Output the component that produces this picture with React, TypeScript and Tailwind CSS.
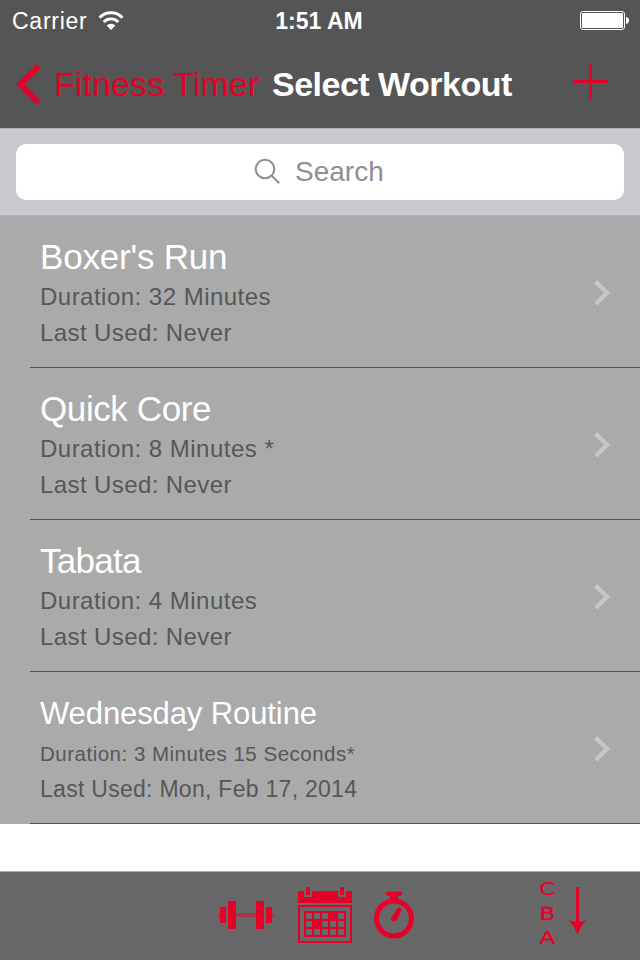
import clsx from "clsx";

const RED = "#e50027";

// ── data ─────────────────────────────────────────────────────────────────────

interface Workout {
  name: string;
  duration: string;
  lastUsed: string;
  nameClass: string;
  durationClass: string;
  lastUsedClass: string;
}

const regular = {
  durationClass: "text-[24px] leading-9 tracking-[0.48px]",
  lastUsedClass: "text-[24px] tracking-[0.4px]",
};

const WORKOUTS: Workout[] = [
  {
    name: "Boxer's Run",
    duration: "32 Minutes",
    lastUsed: "Never",
    nameClass: "text-[35px] tracking-[-0.2px]",
    ...regular,
  },
  {
    name: "Quick Core",
    duration: "8 Minutes *",
    lastUsed: "Never",
    nameClass: "text-[35px] tracking-[-0.4px]",
    ...regular,
  },
  {
    name: "Tabata",
    duration: "4 Minutes",
    lastUsed: "Never",
    nameClass: "text-[35px] tracking-[-0.7px]",
    ...regular,
  },
  {
    name: "Wednesday Routine",
    duration: "3 Minutes 15 Seconds*",
    lastUsed: "Mon, Feb 17, 2014",
    nameClass: "pt-px text-[31px] tracking-[-0.1px]",
    durationClass: "text-[20.5px] leading-[38px] tracking-[0.5px]",
    lastUsedClass: "text-[23px] tracking-[0.28px]",
  },
];

// ── icons ────────────────────────────────────────────────────────────────────

function WifiIcon() {
  return (
    <svg width="26" height="20" viewBox="0 0 26 20" fill="none">
      <path d="M1.6 6.6A16 16 0 0 1 24.4 6.6" stroke="#fff" strokeWidth="3" />
      <path d="M5.6 11A10.4 10.4 0 0 1 20.4 11" stroke="#fff" strokeWidth="2.7" />
      <path d="M13 19L8.6 14.6A6.2 6.2 0 0 1 17.4 14.6Z" fill="#fff" />
    </svg>
  );
}

function BatteryIcon() {
  return (
    <svg width="49" height="19" viewBox="0 0 49 19" fill="none">
      <rect x="0.5" y="0.5" width="44" height="18" rx="2.5" stroke="#fff" />
      <rect x="2" y="2" width="41" height="15" rx="1.2" fill="#fff" />
      <path d="M46 6C48 6.3 49 7.5 49 9.5S48 12.7 46 13Z" fill="#fff" />
    </svg>
  );
}

function DumbbellIcon() {
  return (
    <svg width="56" height="28" viewBox="0 0 56 28" fill={RED}>
      <path
        d="M0 12h2v4H0zM18 12h20v4H18zM54 12h2v4h-2z"
        fillOpacity="0.5"
      />
      <path d="M2 6h6v16H2zM10 0h8v28h-8zM38 0h8v28h-8zM48 6h6v16h-6z" />
    </svg>
  );
}

function CalendarIcon() {
  return (
    <svg width="54" height="56" viewBox="0 0 54 56" fill={RED}>
      <path d="M0 4h6v6h8V4h26v6h8V4h6v12H0z" />
      <path d="M8 0h4v8H8zM42 0h4v8h-4z" />
      <path
        fillRule="evenodd"
        d="M0 18h54v38H0zM2 20v34h50V20zM6 24h42v26H6zM8 26v6h6v-6zM16 26v6h6v-6zM24 26v6h6v-6zM40 26v6h6v-6zM8 34v6h6v-6zM24 34v6h6v-6zM32 34v6h6v-6zM40 34v6h6v-6zM8 42v6h6v-6zM16 42v6h6v-6zM24 42v6h6v-6zM32 42v6h6v-6zM40 42v6h6v-6z"
      />
    </svg>
  );
}

function StopwatchIcon() {
  return (
    <svg width="40" height="48" viewBox="0 0 40 48" fill={RED}>
      <circle cx="20" cy="27.5" r="17.5" fill="none" stroke={RED} strokeWidth="5" />
      <rect x="12" y="0.5" width="16" height="4.2" rx="1.6" />
      <path d="M16 3h8v6h-8z" />
      <path d="M17 27.4L22.8 18Q24.6 15.8 26.4 17Q28.2 18.2 27.2 20.2L22.9 28.8Q21 31 18.6 30.2Q16 29.2 17 27.4Z" />
    </svg>
  );
}

function SortArrowIcon() {
  return (
    <svg width="19" height="48" viewBox="0 0 19 48" fill={RED}>
      <path d="M8 0h3v34.8Q15 34.8 18.8 32.8Q12.8 38.5 9.5 48Q6.2 38.5 0.2 32.8Q4 34.8 8 34.8z" />
    </svg>
  );
}

// ── sections ─────────────────────────────────────────────────────────────────

function StatusBar() {
  return (
    <div className="grid h-10 grid-cols-3 items-center pl-3 pr-[11px] text-[23px] leading-none text-white">
      <div className="flex items-center pt-px">
        <span className="w-[86px] whitespace-nowrap pt-px tracking-[0.75px]">
          Carrier
        </span>
        <WifiIcon />
      </div>
      <span className="pr-[3px] pt-[2px] text-center font-bold">1:51 AM</span>
      <div className="flex justify-end pt-px">
        <BatteryIcon />
      </div>
    </div>
  );
}

function NavBar() {
  return (
    <div className="flex h-[88px] items-center pl-4 pr-8 text-[34px] leading-none">
      <button type="button" className="flex items-center" style={{ color: RED }}>
        <svg width="26" height="42" viewBox="0 0 26 42" fill="none">
          <path d="M22.7 3.3L4.5 21.5L22.7 39.7" stroke={RED} strokeWidth="5.7" />
        </svg>
        <span className="ml-3 w-[218px] whitespace-nowrap text-left tracking-[0.1px]">
          Fitness Timer
        </span>
      </button>
      <h1 className="whitespace-nowrap font-bold tracking-[-0.5px] text-white">
        Select Workout
      </h1>
      <button type="button" aria-label="Add workout" className="mb-[5px] ml-auto">
        <svg width="35" height="35" viewBox="0 0 35 35" fill={RED}>
          <path d="M16 0h3v16h16v3H19v16h-3V19H0v-3h16z" />
        </svg>
      </button>
    </div>
  );
}

function SearchBar() {
  return (
    <div className="h-[88px] border-y border-t-[#b2b1b6] border-b-[#b2b1b6] bg-[#c9c8ce] px-4 pt-[15px]">
      <div className="flex h-14 items-center rounded-[10px] bg-white pl-[238px] text-[28px] leading-none text-[#8e8e93]">
        <svg width="27" height="27" viewBox="0 0 27 27" fill="none" className="mb-px">
          <path
            d="M17.8 17.8L25.2 25.2M20.3 11A9.3 9.3 0 1 1 1.7 11A9.3 9.3 0 0 1 20.3 11Z"
            stroke="#8e8e93"
            strokeWidth="2"
          />
        </svg>
        <span className="ml-[14px]">Search</span>
      </div>
    </div>
  );
}

function WorkoutRow({ workout }: { workout: Workout }) {
  return (
    <li className="h-[152px] bg-[#aaaaaa] pl-[30px]">
      <div className="flex h-full items-center border-b border-[#545454] pl-[10px] pr-[29px]">
        <div className="flex-1 whitespace-nowrap pt-[3px] text-[#575757]">
          <div className={clsx("h-[43px] leading-[41px] text-white", workout.nameClass)}>
            {workout.name}
          </div>
          <div className={clsx("h-9", workout.durationClass)}>
            Duration: {workout.duration}
          </div>
          <div className={clsx("h-9 leading-9", workout.lastUsedClass)}>
            Last Used: {workout.lastUsed}
          </div>
        </div>
        <svg width="17" height="26" viewBox="0 0 17 26" fill="none" className="mt-[2px]">
          <path d="M1.8 1.6L13 12.8L1.8 24" stroke="#c7c7cc" strokeWidth="4.4" />
        </svg>
      </div>
    </li>
  );
}

function Toolbar() {
  return (
    <div className="flex h-[89px] items-center border-t border-[#acacac] bg-[#686868] pb-[2px] pl-[218px]">
      <DumbbellIcon />
      <div className="ml-6">
        <CalendarIcon />
      </div>
      <div className="ml-[22px]">
        <StopwatchIcon />
      </div>
      <div
        className="mb-[2px] ml-[124px] flex w-5 scale-x-[1.28] flex-col items-center pr-px font-['DejaVu_Sans',sans-serif] text-[18px] leading-[24.5px]"
        style={{ color: RED, WebkitTextStroke: `0.3px ${RED}` }}
      >
        <span>C</span>
        <span>B</span>
        <span>A</span>
      </div>
      <div className="mb-2 ml-[10px]">
        <SortArrowIcon />
      </div>
    </div>
  );
}

export default function App() {
  return (
    <div className="flex h-[960px] w-[640px] flex-col overflow-hidden bg-white font-['Liberation_Sans',Arial,sans-serif]">
      <header className="h-32 bg-[#555555]">
        <StatusBar />
        <NavBar />
      </header>
      <SearchBar />
      <ul className="flex-1">
        {WORKOUTS.map((workout) => (
          <WorkoutRow key={workout.name} workout={workout} />
        ))}
      </ul>
      <Toolbar />
    </div>
  );
}
